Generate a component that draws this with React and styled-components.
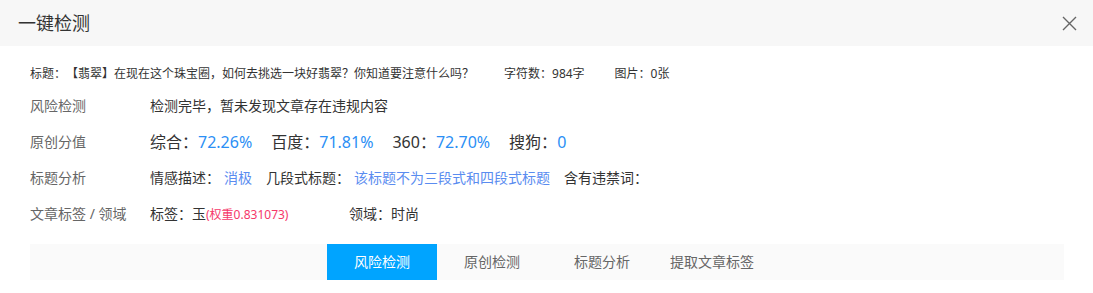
import React from "react"
import styled, { createGlobalStyle } from "styled-components"

const GlobalStyle = createGlobalStyle`
  html, body {
    margin: 0;
    padding: 0;
    background: #fff;
  }
  body {
    font-family: "Noto Sans", "Noto Sans CJK SC", sans-serif;
    color: #333;
    text-spacing-trim: space-all;
  }
`

const Dialog = styled.div`
  width: 1093px;
  height: 293px;
  background: #fff;
  overflow: hidden;
`

const Header = styled.div`
  height: 46px;
  background: #f7f7f7;
  display: flex;
  align-items: center;
  justify-content: space-between;
  padding: 0 16px 0 18px;
`

const HeaderTitle = styled.h3`
  margin: 0;
  font-size: 18px;
  font-weight: 400;
  color: #333;
  line-height: 46px;
`

const CloseButton = styled.button`
  border: 0;
  background: none;
  padding: 0;
  width: 15px;
  height: 15px;
  display: flex;
  cursor: pointer;
`

const Body = styled.div`
  padding: 15px 29px 0 30px;
`

const TitleLine = styled.div`
  height: 26px;
  line-height: 26px;
  font-size: 12px;
  color: #333;
  display: flex;
`

const Meta = styled.span`
  margin-left: 30px;
`

const Row = styled.div`
  height: 36px;
  display: flex;
  align-items: center;
  font-size: 14px;
`

const Label = styled.div`
  width: 120px;
  flex-shrink: 0;
  color: #666;
`

const Value = styled.div`
  display: flex;
  align-items: center;
  color: #333;
  font-size: ${(p) => (p.$big ? "16px" : "14px")};
`

const Score = styled.span`
  margin-right: 19px;
`

const ScoreNum = styled.span`
  color: #2b8ff5;
`

const Link = styled.span`
  color: #5a8cf0;
  margin: 0 14px 0 4px;
`

const TagCell = styled.span`
  width: 199px;
`

const Weight = styled.span`
  color: #f5386a;
  font-size: 12px;
`

const TabBar = styled.div`
  margin-top: 13px;
  height: 36px;
  background: #fafafa;
  display: flex;
  justify-content: center;
`

const Tab = styled.div`
  width: 110px;
  height: 36px;
  line-height: 36px;
  text-align: center;
  font-size: 14px;
  color: ${(p) => (p.$active ? "#fff" : "#666")};
  background: ${(p) => (p.$active ? "#00a4ff" : "transparent")};
  cursor: pointer;
`

const tabs = ["风险检测", "原创检测", "标题分析", "提取文章标签"]

const scores = [
  ["综合：", "72.26%"],
  ["百度：", "71.81%"],
  ["360：", "72.70%"],
  ["搜狗：", "0"],
]

export default function App() {
  return (
    <Dialog>
      <GlobalStyle />
      <Header>
        <HeaderTitle>一键检测</HeaderTitle>
        <CloseButton aria-label="关闭">
          <svg width="15" height="15" viewBox="0 0 15 15">
            <path d="M1 1 L14 14 M14 1 L1 14" stroke="#666" strokeWidth="1.4" fill="none" />
          </svg>
        </CloseButton>
      </Header>
      <Body>
        <TitleLine>
          <span>标题：【翡翠】在现在这个珠宝圈，如何去挑选一块好翡翠？你知道要注意什么吗？</span>
          <Meta>字符数：984字</Meta>
          <Meta>图片：0张</Meta>
        </TitleLine>
        <Row>
          <Label>风险检测</Label>
          <Value>检测完毕，暂未发现文章存在违规内容</Value>
        </Row>
        <Row>
          <Label>原创分值</Label>
          <Value $big>
            {scores.map(([k, v]) => (
              <Score key={k}>
                {k}
                <ScoreNum>{v}</ScoreNum>
              </Score>
            ))}
          </Value>
        </Row>
        <Row>
          <Label>标题分析</Label>
          <Value>
            情感描述：<Link>消极</Link>
            几段式标题：<Link>该标题不为三段式和四段式标题</Link>
            含有违禁词：
          </Value>
        </Row>
        <Row>
          <Label>文章标签 / 领域</Label>
          <Value>
            <TagCell>
              标签：玉<Weight>(权重0.831073)</Weight>
            </TagCell>
            <span>领域：时尚</span>
          </Value>
        </Row>
        <TabBar>
          {tabs.map((t, i) => (
            <Tab key={t} $active={i === 0}>
              {t}
            </Tab>
          ))}
        </TabBar>
      </Body>
    </Dialog>
  )
}
